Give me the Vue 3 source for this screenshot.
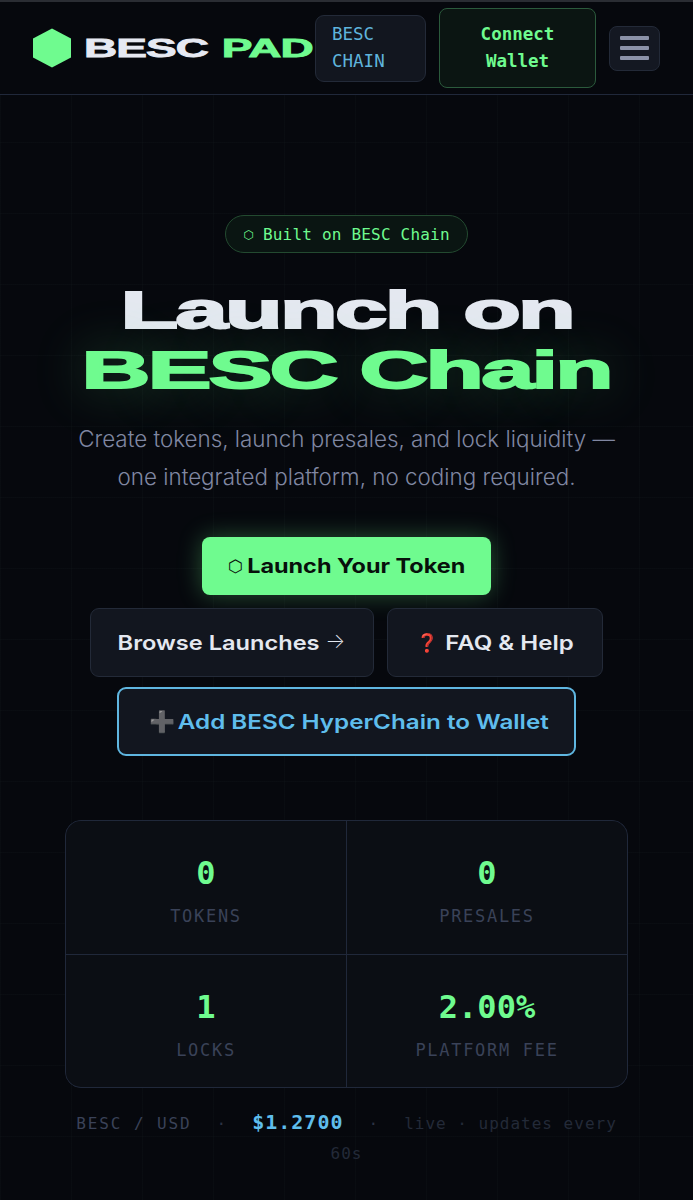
<script setup>
const stats = [
  { value: '0', label: 'TOKENS' },
  { value: '0', label: 'PRESALES' },
  { value: '1', label: 'LOCKS' },
  { value: '2.00%', label: 'PLATFORM FEE' },
]
</script>

<template>
  <div class="page">
    <header class="nav">
      <div class="logo">
        <svg class="hex" viewBox="0 0 40 40" width="40" height="40"><polygon points="20,0.5 39,10.5 39,29.5 20,39.5 1,29.5 1,10.5" fill="#6ffb8f" /></svg>
        <div class="logo-text"><span>BESC</span> <em>PAD</em></div>
      </div>
      <button class="chain">BESC<br />CHAIN</button>
      <button class="connect">Connect<br />Wallet</button>
      <button class="menu"><i></i><i></i><i></i></button>
    </header>

    <main class="hero">
      <div class="pill"><span class="pill-hex">⬡</span> Built on BESC Chain</div>
      <h1><span class="t1">Launch on</span><span class="t2">BESC Chain</span></h1>
      <p class="sub">Create tokens, launch presales, and lock liquidity —<br />one integrated platform, no coding required.</p>

      <div class="actions">
        <button class="btn primary"><span class="ic-hex">⬡</span><span class="w">Launch Your Token</span></button>
        <div class="row">
          <button class="btn ghost b1"><span class="w">Browse Launches</span><span class="arrow">→</span></button>
          <button class="btn ghost b2"><span class="q">❓</span><span class="w">FAQ &amp; Help</span></button>
        </div>
        <button class="btn add"><span class="plus">➕</span><span class="w">Add BESC HyperChain to Wallet</span></button>
      </div>

      <section class="stats">
        <div v-for="s in stats" :key="s.label" class="stat">
          <div class="val">{{ s.value }}</div>
          <div class="lab">{{ s.label }}</div>
        </div>
      </section>

      <div class="ticker">
        <div class="ticker-line"><span class="pair">BESC / USD</span><span class="dot">·</span><strong>$1.2700</strong><span class="dot">·</span><span class="live">live · updates every</span></div>
        <div class="live">60s</div>
      </div>
    </main>
  </div>
</template>

<style>
html, body { margin: 0; background: #06080d; }
</style>

<style scoped>
.page {
  width: 693px; height: 1200px; overflow: hidden; box-sizing: border-box;
  background-color: #06080d;
  background-image:
    linear-gradient(rgba(110, 150, 130, 0.03) 1px, transparent 1px),
    linear-gradient(90deg, rgba(110, 150, 130, 0.03) 1px, transparent 1px);
  background-size: 71px 71px;
  background-position: 0 -2px;
  border-top: 2px solid #2a2d33;
}
button { font: inherit; cursor: pointer; box-sizing: border-box; }
.nav {
  height: 93px; box-sizing: border-box; display: flex; align-items: center;
  padding: 0 33px 0 32px; border-bottom: 1px solid #20283a; background: #06080d;
}
.logo { display: flex; align-items: center; width: 283px; flex: none; }
.hex { flex: none; }
.logo-text {
  font: 800 25px "Liberation Sans", sans-serif; color: #e6e9f2; white-space: nowrap; letter-spacing: -0.5px;
  margin-left: 12px; transform: scaleX(1.84); transform-origin: left center; -webkit-text-stroke: 0.8px currentColor;
}
.logo-text em { font-style: normal; color: #6ffb8f; margin-left: 1px; }
.chain {
  width: 111px; height: 67px; flex: none; margin-right: 13px; text-align: left; padding: 0 16px;
  background: #12161f; border: 1px solid #232a38; border-radius: 9px; color: #5fb4dc;
  font: 400 17.5px/27px "DejaVu Sans Mono", monospace;
}
.connect {
  width: 157px; height: 80px; flex: none; margin-right: 13px;
  background: #0b1512; border: 1px solid #2b5a3c; border-radius: 8px; color: #6ffb8f;
  font: 700 17.5px/27px "DejaVu Sans Mono", monospace;
}
.menu {
  width: 51px; height: 45px; flex: none; display: flex; flex-direction: column; justify-content: center; align-items: center; gap: 6px;
  background: #141822; border: 1px solid #232a38; border-radius: 8px; padding: 0;
}
.menu i { display: block; width: 29px; height: 4px; border-radius: 1px; background: #8b92a8; }

.hero { display: flex; flex-direction: column; align-items: center; padding-top: 120px; }
.pill {
  height: 38px; width: 243px; box-sizing: border-box; display: flex; align-items: center; justify-content: center; gap: 9px; padding-top: 1px;
  border: 1px solid #234a30; border-radius: 19px; background: #0a1512; color: #6ffb8f;
  font: 400 16px "DejaVu Sans Mono", monospace; letter-spacing: 0.2px; white-space: nowrap;
}
.pill-hex { font-family: "DejaVu Sans", sans-serif; font-size: 12px; }
h1 { margin: 27px 0 0; display: flex; flex-direction: column; align-items: center; font: 800 52px/60px "Liberation Sans", sans-serif; letter-spacing: -1.5px; -webkit-text-stroke: 1.9px currentColor; }
.t1 { color: #e4e8f0; transform: scaleX(1.815); white-space: nowrap; }
.t2 { color: #6ffb8f; transform: scaleX(1.835); white-space: nowrap; text-shadow: 0 0 40px rgba(111, 251, 143, 0.3); }
.sub { margin: 20px 0 0; text-align: center; color: #8087a2; font: 300 22.4px/38px "Inter", sans-serif; }
.actions { margin-top: 41px; display: flex; flex-direction: column; align-items: center; }
.btn { display: flex; align-items: center; white-space: nowrap; font-family: "Inter", sans-serif; }
.w { display: inline-block; flex: none; }
.primary {
  width: 289px; height: 58px; border: 0; border-radius: 8px; background: #6ffb8f; color: #07100b;
  font-size: 20px; font-weight: 700; box-shadow: 0 0 24px rgba(111, 251, 143, 0.3);
  padding-left: 26px; gap: 20px;
}
.primary .w { transform: scaleX(1.17); }
.ic-hex { font: 700 17px "DejaVu Sans", sans-serif; }
.row { display: flex; gap: 13px; margin-top: 13px; }
.ghost {
  height: 69px; border: 1px solid #232a38; border-radius: 9px; background: #12161f; color: #e4e8f0;
  font-size: 20px; font-weight: 600;
}
.b1 { width: 284px; padding-left: 42px; gap: 21px; }
.b1 .w { transform: scaleX(1.18); }
.arrow { font-weight: 200; font-size: 21px; margin-top: -5px; }
.b2 { width: 216px; padding-left: 28px; gap: 18px; }
.b2 .w { transform: scaleX(1.2); }
.q { font: 400 18px "DejaVu Sans", sans-serif; }
.add {
  width: 459px; height: 69px; margin-top: 10px; padding-left: 30px; gap: 35px; border: 2px solid #5fb6e0; border-radius: 9px; background: #12161f; color: #5fbdec;
  font-size: 20px; font-weight: 600;
}
.add .w { transform: scaleX(1.21); }
.plus { color: #555; font: 400 21px "DejaVu Sans", sans-serif; }
.stats {
  margin-top: 64px; width: 563px; height: 268px; box-sizing: border-box; display: grid; grid-template-columns: 1fr 1fr; grid-template-rows: 1fr 1fr;
  gap: 1px; background: #20283a; border: 1px solid #20283a; border-radius: 16px; overflow: hidden;
}
.stat { background: #0b0e14; display: flex; flex-direction: column; align-items: center; justify-content: center; padding-top: 8px; box-sizing: border-box; }
.val { color: #6ffb8f; font: 700 32px/38px "DejaVu Sans Mono", monospace; }
.lab { margin-top: 12px; color: #3a4258; font: 400 17px/24px "DejaVu Sans Mono", monospace; letter-spacing: 1.7px; }
.ticker {
  margin-top: 19px; width: 563px; text-align: center; color: #3a4258;
  font: 400 16px/30px "DejaVu Sans Mono", monospace; letter-spacing: 1px;
}
.ticker-line { white-space: nowrap; }
.pair { letter-spacing: 1.9px; }
.ticker strong { color: #5fbdec; font-size: 20px; }
.dot { margin: 0 25px; color: #2c3344; }
.live { color: #232a38; }
</style>
